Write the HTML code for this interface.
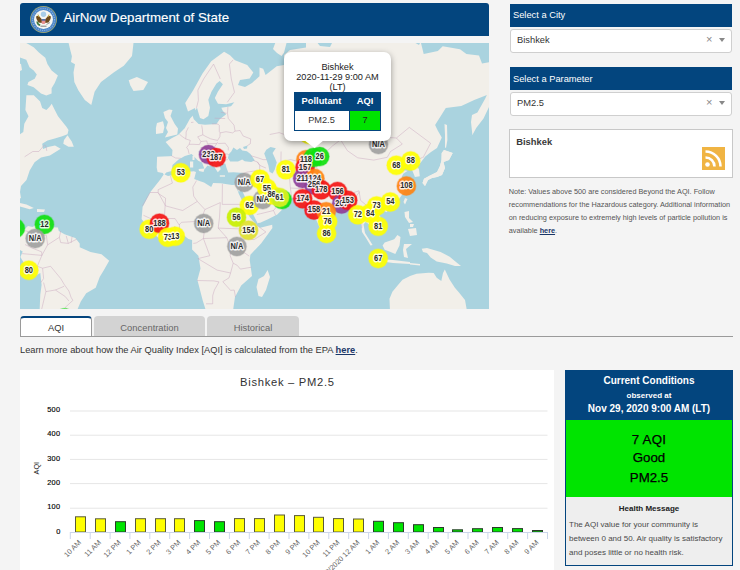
<!DOCTYPE html>
<html><head><meta charset="utf-8">
<style>
*{box-sizing:border-box;margin:0;padding:0}
html,body{width:740px;height:570px;overflow:hidden}
body{background:#f4f4f4;font-family:"Liberation Sans",sans-serif;position:relative;color:#333}
.abs{position:absolute}
.t{position:absolute;white-space:nowrap;line-height:1}
.hdr{left:20px;top:3px;width:469px;height:33px;background:#03457e;border-radius:3px 3px 0 0}
.bluebar{position:absolute;left:510px;width:222px;height:23px;background:#03457e;color:#fff;font-size:9.3px}
.sel{position:absolute;left:509.6px;width:222.9px;height:24px;background:#fff;border:1px solid #cfcfcf;border-radius:3px}
.popup{left:284px;top:52px;width:107px;height:89px;background:#fff;border-radius:7px;box-shadow:0 2px 6px rgba(0,0,0,0.38)}
.tab{position:absolute;top:316px;height:20px;border-radius:4px 4px 0 0;font-size:9.4px;text-align:center}
</style></head><body>
<div class="abs hdr"></div>
<svg class="abs" style="left:29px;top:5px" width="29" height="29" viewBox="0 0 29 29">
<circle cx="14.5" cy="14.5" r="13.4" fill="#a9ab6c"/>
<circle cx="14.5" cy="14.5" r="12.7" fill="#4a84c8"/>
<circle cx="14.5" cy="14.5" r="11" fill="none" stroke="#8fb6e0" stroke-width="1.2" stroke-dasharray="1 1.2"/>
<circle cx="14.5" cy="14.5" r="9.5" fill="#f6f6f2"/>
<circle cx="14.5" cy="9.3" r="2.7" fill="#a8cde8"/>
<path d="M7 11.5 L9.5 10.5 L13 14.5 L12.8 18 L9.5 17.5 L7.5 14 Z" fill="#6e4a1c"/>
<path d="M22 11.5 L19.5 10.5 L16 14.5 L16.2 18 L19.5 17.5 L21.5 14 Z" fill="#6e4a1c"/>
<path d="M9 9.5 L10 12" stroke="#c9b24a" stroke-width="1"/><path d="M20 9.5 L19 12" stroke="#c9b24a" stroke-width="1"/>
<rect x="12.7" y="14.2" width="3.6" height="4.8" rx="1.3" fill="#ea8f8f"/>
<rect x="12.7" y="14.2" width="3.6" height="1.4" fill="#2f5fa8"/>
<path d="M8.2 16.5 Q8.4 19.5 11.2 20.3" stroke="#3f7a3f" stroke-width="1.7" fill="none"/>
<path d="M17.5 19.5 L21 17.5" stroke="#9a9a9a" stroke-width="1"/>
<path d="M11.5 21.2 L17.5 21.2" stroke="#8a8a8a" stroke-width="1.1"/>
</svg>
<div class="t" style="left:63.5px;top:10.6px;font-size:13.3px;color:#fff;-webkit-text-stroke:0.15px #fff">AirNow Department of State</div>

<svg width="469" height="266" viewBox="20 43 469 266" style="position:absolute;left:20px;top:43px;display:block">
<rect x="0" y="0" width="740" height="570" fill="#aad3df"/>
<g fill="#f2efe9">
<path d="M18.0 43.0 L26.3 43.0 L33.7 47.2 L38.9 52.5 L45.3 57.7 L47.4 64.0 L51.6 70.4 L57.9 75.6 L54.7 83.0 L51.6 88.3 L51.6 93.5 L46.3 95.6 L41.0 93.5 L33.7 87.2 L27.4 85.1 L28.4 82.0 L34.7 78.8 L36.8 74.6 L33.7 70.4 L29.5 67.2 L26.3 59.8 L18.0 56.7Z"/>
<path d="M18.0 63.0 L21.0 64.0 L22.0 70.0 L18.0 72.0Z"/>
<path d="M26.4 95.3 L33.8 95.3 L40.1 101.6 L42.2 107.9 L46.4 110.0 L49.6 106.8 L51.7 103.7 L54.8 110.0 L58.0 116.3 L62.2 121.6 L66.4 126.8 L68.5 130.0 L67.5 134.2 L62.2 136.3 L54.8 138.4 L47.5 140.5 L42.2 143.7 L43.0 149.0 L48.0 147.0 L55.0 145.5 L60.7 148.8 L49.9 155.4 L41.0 157.4 L34.6 162.3 L29.7 170.4 L26.5 180.0 L21.0 186.0 L20.0 192.0 L21.0 198.1 L18.0 199.0 L18.0 134.2 L20.0 134.2 L23.3 132.1 L24.3 123.7 L28.5 116.3 L25.4 110.0Z"/>
<path d="M63.3 143.7 L64.0 140.0 L67.5 135.3 L71.7 141.6 L73.8 146.8 L68.5 146.8Z"/>
<path d="M18.0 202.5 L26.5 204.4 L33.8 208.1 L29.7 209.3 L18.0 206.0Z"/>
<path d="M37.0 209.0 L45.0 209.5 L44.0 212.0 L37.0 212.0Z"/>
<path d="M68.6 43.0 L133.5 43.0 L132.0 56.0 L123.8 65.7 L114.0 72.2 L101.0 82.0 L94.6 91.7 L91.3 104.9 L84.8 100.0 L78.3 90.2 L74.3 82.1 L73.5 72.4 L75.0 64.3 L71.0 61.9 L71.9 56.2 L70.2 49.7Z"/>
<path d="M128.7 80.3 L136.8 77.0 L148.0 82.0 L143.3 90.0 L133.5 91.0 L130.3 85.2Z"/>
<path d="M169.1 109.5 L172.5 110.0 L170.5 116.0 L174.7 124.0 L178.0 128.4 L177.3 134.5 L164.9 137.4 L168.0 132.0 L166.0 128.0 L168.0 122.0 L165.0 118.0 L163.4 112.0Z"/>
<path d="M157.0 123.0 L163.0 121.2 L164.4 127.0 L163.0 133.0 L156.0 134.0 L155.9 128.0Z"/>
<path d="M18.0 228.0 L23.6 230.0 L28.0 226.0 L32.5 227.0 L38.4 224.0 L40.0 227.5 L47.4 227.0 L57.9 227.5 L58.8 231.0 L64.5 234.3 L70.2 236.2 L75.3 237.9 L79.7 243.4 L79.7 247.2 L90.5 252.0 L101.5 254.2 L109.2 260.8 L103.8 270.3 L99.7 277.0 L95.7 287.8 L86.2 293.2 L80.8 301.4 L76.8 311.0 L39.6 311.0 L40.3 294.6 L41.6 285.1 L40.3 273.0 L35.0 276.0 L28.2 270.4 L20.4 257.1 L22.7 251.6 L18.0 249.0Z"/>
<path d="M188.0 111.5 L185.2 102.9 L193.2 90.3 L202.5 73.4 L211.2 61.3 L224.1 51.8 L230.0 55.3 L235.0 60.2 L247.2 65.1 L253.3 72.5 L249.7 78.6 L240.0 80.0 L238.0 85.0 L245.0 87.0 L252.0 83.0 L259.5 76.2 L259.5 67.6 L263.2 68.8 L265.6 75.0 L276.7 66.3 L284.0 65.1 L284.0 55.0 L290.0 50.0 L306.0 47.5 L306.0 41.0 L420.5 41.0 L423.7 54.0 L437.9 50.9 L442.7 46.2 L460.0 49.3 L466.4 54.0 L479.0 55.6 L482.0 63.5 L491.0 62.0 L491.0 103.0 L483.5 118.4 L476.2 128.1 L472.4 135.0 L441.8 137.4 L437.0 148.0 L431.0 152.0 L425.3 156.5 L421.1 162.0 L417.0 166.6 L419.0 169.3 L419.8 176.2 L414.9 176.9 L411.8 169.3 L410.9 165.3 L406.9 163.6 L404.6 163.4 L401.9 165.1 L398.3 167.0 L400.6 169.9 L405.5 170.5 L407.8 170.7 L403.3 173.8 L401.7 177.0 L406.1 184.9 L404.0 191.9 L398.9 199.2 L391.7 204.0 L383.3 206.0 L377.6 207.2 L375.5 210.7 L380.3 216.5 L382.2 224.3 L378.0 229.0 L373.8 230.8 L371.0 227.0 L368.0 223.5 L365.6 222.0 L363.5 224.5 L365.0 233.0 L369.0 239.2 L372.6 245.0 L370.5 245.5 L366.0 238.0 L362.0 232.0 L361.5 226.0 L360.0 220.0 L357.5 214.9 L355.2 216.5 L352.0 212.0 L351.4 208.5 L348.5 204.4 L342.8 205.0 L340.0 208.5 L333.9 213.1 L327.6 222.3 L322.5 231.8 L320.0 228.2 L315.2 217.4 L313.0 210.5 L305.7 206.4 L302.9 202.5 L302.0 198.6 L289.9 197.6 L284.5 197.0 L283.0 194.0 L281.7 195.3 L282.4 199.5 L286.1 201.2 L288.5 203.3 L277.3 214.5 L268.0 219.3 L260.2 222.7 L257.5 223.0 L256.6 225.0 L260.2 227.8 L268.2 225.7 L272.2 224.7 L272.4 228.0 L261.1 243.4 L250.4 254.8 L249.7 260.1 L252.0 276.0 L241.2 285.5 L235.0 297.0 L233.6 306.6 L233.0 311.0 L206.0 311.0 L202.6 300.0 L200.0 290.0 L197.4 280.0 L200.5 268.4 L198.4 255.8 L192.1 249.5 L192.1 240.0 L188.4 239.1 L183.4 235.1 L174.7 236.8 L167.1 237.1 L160.1 238.9 L149.8 231.0 L148.9 229.0 L141.6 219.0 L142.6 206.9 L150.4 191.9 L160.3 179.4 L163.7 174.4 L162.8 173.0 L157.6 172.0 L156.7 167.4 L157.1 156.8 L169.1 156.3 L172.0 156.0 L172.5 150.0 L165.6 142.0 L171.6 138.3 L178.3 134.7 L184.7 128.2 L190.1 118.5 L194.9 113.6 L195.1 108.1Z"/>
<path d="M276.0 41.0 L287.0 41.0 L284.0 52.8 L281.6 56.0 L277.0 53.0 L273.0 49.0Z"/>
<path d="M444.0 150.0 L452.7 153.0 L449.0 160.0 L443.5 162.0 L445.0 168.0 L442.0 175.0 L437.0 177.0 L432.0 178.0 L428.0 180.0 L425.0 186.0 L422.5 183.0 L424.0 178.8 L430.0 175.5 L437.0 172.0 L440.0 166.0 L441.5 160.0 L441.7 153.0Z"/>
<path d="M444.5 124.0 L447.0 125.0 L447.4 140.0 L446.0 148.0 L445.0 147.0 L445.0 135.0Z"/>
<path d="M386.0 259.5 L393.0 260.0 L410.0 262.0 L410.0 264.0 L393.0 263.0 L386.0 262.0Z"/>
<path d="M410.0 263.0 L420.0 264.0 L420.0 265.5 L410.0 264.5Z"/>
<path d="M382.6 245.5 L384.7 242.4 L394.2 239.2 L397.4 235.0 L400.5 237.1 L399.5 245.5 L395.3 254.0 L390.0 251.8 L384.7 249.7Z"/>
<path d="M404.0 244.0 L412.0 244.0 L406.0 249.0 L408.0 258.0 L404.0 257.0 L403.0 250.0Z"/>
<path d="M404.5 212.0 L409.0 211.0 L409.0 218.0 L413.0 222.0 L409.0 223.0 L405.0 217.0Z"/>
<path d="M408.0 229.0 L416.0 228.0 L417.0 235.0 L410.0 236.0Z"/>
<path d="M410.0 224.0 L414.0 224.0 L413.0 227.0 L410.0 227.0Z"/>
<path d="M405.0 198.0 L407.5 199.0 L405.0 204.5 L403.5 202.0Z"/>
<path d="M383.5 208.5 L388.0 208.5 L387.0 212.3 L384.0 211.0Z"/>
<path d="M421.7 248.8 L427.0 248.0 L440.6 252.0 L449.7 256.7 L456.0 262.0 L461.0 266.0 L455.0 266.0 L446.8 263.6 L436.7 261.6 L430.7 257.5 L427.0 253.0 L423.0 252.0Z"/>
<path d="M390.0 311.0 L389.5 298.8 L392.4 291.8 L398.0 285.0 L402.5 279.7 L410.0 276.0 L416.6 273.7 L428.7 272.7 L433.7 273.0 L436.7 277.7 L441.3 280.9 L443.0 273.0 L444.8 269.6 L449.7 279.8 L454.9 287.8 L459.2 292.7 L465.0 300.0 L467.0 311.0Z"/>
<path d="M267.6 270.1 L270.0 277.0 L266.0 290.0 L262.0 297.0 L258.5 296.0 L256.5 287.0 L258.5 279.0 L264.0 276.0Z"/>
<path d="M327.0 229.0 L329.0 229.0 L331.0 233.0 L329.0 236.0 L327.0 235.0Z"/>
<path d="M198.6 169.0 L204.6 168.5 L203.5 172.0 L199.0 171.0Z"/>
</g><g fill="#aad3df">
<path d="M192.1 114.3 L193.8 119.2 L198.6 124.0 L205.1 124.8 L216.5 124.0 L219.7 119.2 L226.2 114.3 L222.9 111.0 L221.3 107.8 L231.0 106.2 L234.3 102.2 L226.2 104.3 L218.0 103.8 L214.8 98.1 L218.0 91.6 L222.9 84.3 L219.7 81.1 L216.5 83.5 L211.6 91.6 L208.3 99.7 L210.0 107.8 L208.3 116.0 L203.5 119.2 L200.0 118.0 L197.0 107.8Z"/>
<path d="M164.6 174.4 L166.2 172.6 L171.6 170.9 L172.5 165.0 L178.6 159.6 L184.9 156.0 L191.6 154.0 L198.2 160.7 L202.0 162.4 L204.6 169.3 L207.5 165.5 L210.2 166.6 L207.1 162.0 L200.7 156.0 L198.4 151.6 L201.2 151.0 L206.1 156.4 L212.1 162.0 L215.0 168.0 L217.8 172.3 L220.7 169.3 L218.8 162.8 L225.4 163.7 L226.4 167.6 L228.3 172.6 L233.5 172.3 L243.9 173.0 L242.7 178.8 L240.4 184.6 L236.6 184.8 L232.0 185.0 L220.7 183.3 L213.1 183.0 L211.2 186.9 L204.0 182.4 L200.2 181.2 L194.2 179.0 L196.0 172.0 L193.9 171.3 L180.4 172.6 L173.5 175.0 L168.0 176.0Z"/>
<path d="M230.2 161.4 L227.9 158.0 L229.0 154.0 L231.3 151.5 L233.4 147.4 L237.0 150.0 L240.0 148.0 L242.3 150.5 L246.9 151.3 L250.5 154.0 L254.8 160.5 L251.2 161.9 L244.7 161.2 L242.2 159.6 L238.0 161.5 L234.0 161.6Z"/>
<path d="M243.0 147.0 L247.5 145.5 L247.0 148.5 L244.0 149.0Z"/>
<path d="M270.5 147.1 L275.8 148.2 L272.6 152.9 L274.7 157.6 L276.8 162.4 L274.7 169.7 L272.6 173.4 L269.5 171.8 L268.4 165.5 L266.3 159.2 L264.2 153.4 L266.3 149.7Z"/>
<path d="M236.5 187.5 L238.9 194.0 L242.1 200.6 L245.4 209.3 L249.7 217.0 L256.6 225.0 L257.5 223.0 L252.0 212.0 L249.2 205.5 L245.0 197.0 L241.2 188.6 L239.0 192.0Z"/>
<path d="M266.9 187.5 L265.9 189.0 L269.7 195.3 L272.5 197.2 L278.0 199.5 L279.8 197.9 L281.7 195.3 L283.0 194.0 L281.7 193.7 L276.0 192.5 L271.2 189.7Z"/>
<path d="M435.1 125.1 L445.8 108.0 L461.3 105.9 L474.2 99.9 L486.9 95.1 L485.0 99.0 L477.4 112.5 L472.0 115.0 L471.0 122.0 L472.4 134.9 L460.0 140.0 L452.7 150.0 L446.0 148.0 L441.8 137.4 L438.0 131.0Z"/>
<path d="M316.0 41.0 L333.0 41.0 L330.0 47.0 L320.0 46.0Z"/>
<path d="M412.0 41.0 L421.0 41.0 L419.0 45.0Z"/>
</g><g fill="#f2efe9">
<path d="M198.6 169.0 L204.6 168.5 L203.5 172.0 L199.0 171.0Z"/>
<path d="M190.0 161.5 L193.2 161.5 L193.2 167.5 L190.0 167.5Z"/>
<path d="M192.5 155.8 L194.5 155.8 L194.5 160.0 L192.5 160.0Z"/>
<path d="M219.8 175.3 L225.0 175.3 L225.0 176.7 L219.8 176.7Z"/>
<path d="M236.5 177.0 L241.0 176.0 L240.0 178.5 L237.0 178.5Z"/>
<path d="M444.5 124.0 L447.0 125.0 L447.4 140.0 L446.0 148.0 L445.0 147.0 L445.0 135.0Z"/>
<path d="M444.0 150.0 L452.7 153.0 L449.0 160.0 L443.5 162.0 L445.0 168.0 L442.0 175.0 L437.0 177.0 L432.0 178.0 L428.0 180.0 L425.0 186.0 L422.5 183.0 L424.0 178.8 L430.0 175.5 L437.0 172.0 L440.0 166.0 L441.5 160.0 L441.7 153.0Z"/>
</g>
<g fill="none" stroke="#c6a4bd" stroke-width="0.75" stroke-opacity="0.6" stroke-linejoin="round">
<path d="M171.3 155.7 L175.6 158.0 L180.8 158.3"/>
<path d="M179.4 134.2 L182.3 136.6 L185.7 138.9 L190.3 140.4 L189.1 144.3 L186.5 147.7 L188.0 149.1 L189.1 153.9"/>
<path d="M191.0 122.5 L193.5 122.2"/>
<path d="M188.4 127.4 L186.1 132.0 L186.1 135.1 L185.7 138.9"/>
<path d="M201.7 125.4 L202.4 129.6 L202.8 134.8 L197.7 136.8 L200.9 141.5 L199.4 144.6 L192.9 144.3 L189.1 144.3"/>
<path d="M211.9 123.8 L218.0 124.1 L219.3 125.4 L219.3 131.4 L220.1 132.9 L219.9 136.6 L217.6 140.4"/>
<path d="M202.8 134.8 L206.0 136.6 L210.8 138.9 L217.6 140.4"/>
<path d="M200.9 141.5 L206.8 140.9 L207.4 143.8 L216.9 143.5 L217.6 142.1"/>
<path d="M205.7 147.4 L210.6 149.1 L213.3 148.5 L216.9 143.5"/>
<path d="M200.7 147.7 L205.7 147.4"/>
<path d="M218.2 143.5 L225.2 143.2 L228.3 147.4 L228.3 150.4"/>
<path d="M218.2 154.9 L222.2 154.7 L227.1 153.9 L229.0 154.9"/>
<path d="M218.2 161.1 L224.7 160.1 L227.9 159.6"/>
<path d="M210.6 149.1 L211.4 153.3 L211.2 157.8 L211.9 160.1"/>
<path d="M213.8 158.6 L218.2 161.1 L217.3 158.6 L218.2 154.9 L217.4 152.6 L213.3 148.5"/>
<path d="M229.4 64.1 L231.3 79.0 L234.5 92.3 L227.3 102.3"/>
<path d="M213.6 64.1 L203.6 79.0 L197.9 90.1 L198.4 100.3 L196.5 107.9"/>
<path d="M213.6 64.1 L220.3 79.0"/>
<path d="M229.4 64.1 L233.2 59.8"/>
<path d="M227.9 106.8 L227.5 113.3 L228.3 118.5 L234.0 125.1 L235.1 131.1 L240.1 130.5 L243.1 136.0 L250.7 138.9 L250.3 143.8 L247.3 145.7"/>
<path d="M220.9 112.3 L226.6 113.3"/>
<path d="M214.6 118.2 L225.2 118.5"/>
<path d="M220.1 132.9 L226.0 131.7 L232.6 132.9 L235.1 131.1"/>
<path d="M250.7 155.7 L257.9 157.8 L263.0 159.6 L266.8 159.6"/>
<path d="M253.5 160.6 L257.3 161.9 L259.6 165.3 L259.8 171.4 L255.3 170.9 L246.9 172.1 L243.1 174.0"/>
<path d="M265.9 168.0 L260.2 165.6 L257.3 161.9"/>
<path d="M259.8 171.4 L261.7 176.3 L264.8 182.2 L266.8 187.5"/>
<path d="M255.3 170.9 L252.6 177.5 L248.4 180.0 L249.4 182.5 L259.6 189.3 L263.0 189.5"/>
<path d="M248.4 180.0 L242.3 181.6 L241.0 188.6"/>
<path d="M256.8 214.5 L260.6 213.7 L273.5 210.5 L275.6 215.3"/>
<path d="M272.7 199.9 L279.6 203.2 L273.5 210.5"/>
<path d="M222.4 184.0 L222.2 204.4 L244.8 204.4"/>
<path d="M196.5 180.6 L192.8 187.1 L193.7 196.1 L197.3 201.4 L204.9 209.5 L220.3 202.6"/>
<path d="M170.5 176.1 L172.4 183.1 L158.2 189.7 L158.2 192.5"/>
<path d="M158.2 192.5 L165.6 205.9 L182.7 210.5 L197.3 201.4"/>
<path d="M158.2 193.4 L165.6 198.2 L164.4 217.5 L151.5 219.0 L143.5 215.3"/>
<path d="M158.2 192.5 L150.0 192.5 L142.4 205.9"/>
<path d="M204.9 209.5 L200.5 221.2 L181.5 222.3 L179.1 224.9 L175.1 218.6 L167.1 218.4"/>
<path d="M220.3 202.6 L219.5 217.3 L218.2 228.1 L226.8 237.7 L203.4 238.5 L204.1 232.9 L201.3 227.0 L202.2 222.3"/>
<path d="M218.2 228.1 L239.7 228.9 L244.8 204.4"/>
<path d="M239.7 228.9 L241.2 238.7 L254.1 239.6 L265.9 232.0 L256.8 225.3"/>
<path d="M226.8 237.7 L230.9 249.1 L230.2 255.7 L233.2 263.2 L230.6 273.0 L217.1 270.1 L197.9 258.6"/>
<path d="M203.4 238.5 L196.2 243.0 L193.3 243.4"/>
<path d="M203.4 238.5 L209.8 255.7 L197.9 258.6"/>
<path d="M239.3 249.1 L249.2 256.1"/>
<path d="M251.5 267.2 L240.4 269.1 L237.2 265.3 L233.2 263.2"/>
<path d="M197.1 280.5 L213.8 280.9 L219.0 281.9"/>
<path d="M230.6 273.0 L229.0 277.9 L222.8 281.7 L230.6 290.4 L234.2 290.0 L235.5 297.0"/>
<path d="M206.0 303.8 L212.7 303.8 L212.7 295.7 L214.4 290.0 L219.0 281.9"/>
<path d="M151.9 223.3 L146.2 228.1"/>
<path d="M155.7 226.2 L149.4 229.1 L154.2 232.0 L158.9 232.9 L160.4 237.7"/>
<path d="M164.2 228.1 L169.2 237.5"/>
<path d="M174.5 226.2 L177.0 235.6"/>
<path d="M179.4 224.3 L179.8 235.0"/>
<path d="M269.7 134.5 L279.2 132.6 L286.0 135.1 L290.6 123.5 L306.2 121.2 L320.0 125.1 L333.3 136.6 L340.6 139.8"/>
<path d="M340.6 139.8 L361.8 131.4 L375.9 136.6 L396.4 138.0 L409.3 127.4 L430.6 143.2 L423.0 157.8"/>
<path d="M340.6 139.8 L347.4 150.7 L357.7 157.8 L373.8 160.1 L387.3 157.3 L390.5 151.5 L402.3 144.1 L396.4 138.0"/>
<path d="M340.6 139.8 L332.4 146.0 L326.7 151.5 L327.1 157.0 L314.9 163.9 L317.0 168.0 L317.2 171.6"/>
<path d="M281.1 151.5 L280.9 161.9 L290.6 159.6 L303.9 162.9 L309.6 158.3 L319.1 156.8"/>
<path d="M286.8 170.9 L301.0 170.9 L304.3 168.0 L303.3 165.6"/>
<path d="M310.5 171.6 L308.6 178.6 L306.4 184.2 L301.0 188.6 L290.4 188.0"/>
<path d="M291.0 170.9 L289.6 178.6 L290.4 188.0 L291.7 197.6"/>
<path d="M317.2 171.6 L323.8 177.5 L325.7 182.0 L328.6 187.5 L341.9 191.9 L349.5 194.0 L359.0 190.8"/>
<path d="M317.2 182.0 L315.3 187.5 L308.6 192.3 L305.4 199.9"/>
<path d="M342.5 195.1 L343.8 198.2 L343.8 204.4"/>
<path d="M350.4 198.2 L350.1 206.5 L354.2 199.3 L359.4 191.9"/>
<path d="M359.0 190.8 L360.5 200.3 L366.6 205.5 L365.1 207.7 L360.5 212.5 L361.8 218.4 L361.8 228.1"/>
<path d="M368.1 202.8 L377.1 202.8 L379.9 205.5"/>
<path d="M365.1 207.7 L369.4 212.5 L375.1 218.4 L370.4 219.8 L369.4 224.3"/>
<path d="M368.5 205.5 L375.1 213.5 L378.9 219.4 L373.2 227.2"/>
<path d="M422.6 157.3 L414.1 161.9 L410.9 164.6"/>
<path d="M37.5 224.7 L37.9 233.9 L46.4 235.4 L47.6 244.9"/>
<path d="M25.0 244.5 L31.6 247.8 L41.7 251.9 L41.9 255.4"/>
<path d="M76.7 239.2 L68.3 243.4 L60.7 242.6 L59.4 237.3 L47.6 244.9 L41.9 255.4 L37.3 266.3 L42.6 268.2 L50.6 266.3 L60.7 278.5 L64.5 284.9 L68.9 291.0 L71.0 297.2 L72.9 300.4 L65.3 307.3 L73.2 315.1"/>
<path d="M22.1 253.6 L41.9 255.4"/>
<path d="M42.6 268.2 L43.6 278.5 L40.9 282.5"/>
<path d="M43.6 282.5 L45.9 291.6 L55.4 290.0 L64.1 286.3"/>
<path d="M55.4 290.0 L65.3 296.6 L68.9 301.0"/>
<path d="M45.9 291.6 L41.7 309.1"/>
<path d="M60.7 231.0 L59.4 237.3"/>
<path d="M66.2 235.8 L68.3 243.4"/>
<path d="M72.1 236.4 L71.1 243.0"/>
<path d="M24.6 156.8 L32.8 151.5 L38.8 151.5 L44.5 144.9 L45.9 146.0 L46.8 150.9"/>
<path d="M17.2 229.1 L28.0 231.4"/>
</g>
<circle cx="15.3" cy="228.4" r="10.2" fill="#10e010" fill-opacity="0.35"/><circle cx="15.3" cy="228.4" r="9.5" fill="#10e010" fill-opacity="0.88"/>
<circle cx="44.4" cy="224.4" r="10.2" fill="#10e010" fill-opacity="0.35"/><circle cx="44.4" cy="224.4" r="9.5" fill="#10e010" fill-opacity="0.88"/>
<circle cx="35.2" cy="238.5" r="10.2" fill="#a0a0a0" fill-opacity="0.35"/><circle cx="35.2" cy="238.5" r="9.5" fill="#a0a0a0" fill-opacity="0.88"/>
<circle cx="28.8" cy="270.3" r="10.2" fill="#ffff00" fill-opacity="0.35"/><circle cx="28.8" cy="270.3" r="9.5" fill="#ffff00" fill-opacity="0.88"/>
<circle cx="64.6" cy="318" r="10.2" fill="#10e010" fill-opacity="0.35"/><circle cx="64.6" cy="318" r="9.5" fill="#10e010" fill-opacity="0.88"/>
<circle cx="180.8" cy="172.7" r="10.2" fill="#ffff00" fill-opacity="0.35"/><circle cx="180.8" cy="172.7" r="9.5" fill="#ffff00" fill-opacity="0.88"/>
<circle cx="208.5" cy="154.6" r="10.2" fill="#8f3f97" fill-opacity="0.35"/><circle cx="208.5" cy="154.6" r="9.5" fill="#8f3f97" fill-opacity="0.88"/>
<circle cx="216.2" cy="157.6" r="10.2" fill="#f41414" fill-opacity="0.35"/><circle cx="216.2" cy="157.6" r="9.5" fill="#f41414" fill-opacity="0.88"/>
<circle cx="244.2" cy="182.4" r="10.2" fill="#a0a0a0" fill-opacity="0.35"/><circle cx="244.2" cy="182.4" r="9.5" fill="#a0a0a0" fill-opacity="0.88"/>
<circle cx="249.4" cy="205.4" r="10.2" fill="#ffff00" fill-opacity="0.35"/><circle cx="249.4" cy="205.4" r="9.5" fill="#ffff00" fill-opacity="0.88"/>
<circle cx="236.5" cy="217.3" r="10.2" fill="#c8f000" fill-opacity="0.35"/><circle cx="236.5" cy="217.3" r="9.5" fill="#c8f000" fill-opacity="0.88"/>
<circle cx="149.2" cy="229.2" r="10.2" fill="#ffff00" fill-opacity="0.35"/><circle cx="149.2" cy="229.2" r="9.5" fill="#ffff00" fill-opacity="0.88"/>
<circle cx="159.5" cy="223.2" r="10.2" fill="#f41414" fill-opacity="0.35"/><circle cx="159.5" cy="223.2" r="9.5" fill="#f41414" fill-opacity="0.88"/>
<circle cx="167.8" cy="237.3" r="10.2" fill="#ffff00" fill-opacity="0.35"/><circle cx="167.8" cy="237.3" r="9.5" fill="#ffff00" fill-opacity="0.88"/>
<circle cx="175.2" cy="236.3" r="10.2" fill="#ffff00" fill-opacity="0.35"/><circle cx="175.2" cy="236.3" r="9.5" fill="#ffff00" fill-opacity="0.88"/>
<circle cx="203.7" cy="223.4" r="10.2" fill="#a0a0a0" fill-opacity="0.35"/><circle cx="203.7" cy="223.4" r="9.5" fill="#a0a0a0" fill-opacity="0.88"/>
<circle cx="248.5" cy="230.3" r="10.2" fill="#e0e030" fill-opacity="0.35"/><circle cx="248.5" cy="230.3" r="9.5" fill="#e0e030" fill-opacity="0.88"/>
<circle cx="236.9" cy="246.5" r="10.2" fill="#a0a0a0" fill-opacity="0.35"/><circle cx="236.9" cy="246.5" r="9.5" fill="#a0a0a0" fill-opacity="0.88"/>
<circle cx="285.8" cy="169.7" r="10.2" fill="#ffff00" fill-opacity="0.35"/><circle cx="285.8" cy="169.7" r="9.5" fill="#ffff00" fill-opacity="0.88"/>
<circle cx="260" cy="179.2" r="10.2" fill="#ffff00" fill-opacity="0.35"/><circle cx="260" cy="179.2" r="9.5" fill="#ffff00" fill-opacity="0.88"/>
<circle cx="262.8" cy="199.5" r="10.2" fill="#a0a0a0" fill-opacity="0.35"/><circle cx="262.8" cy="199.5" r="9.5" fill="#a0a0a0" fill-opacity="0.88"/>
<circle cx="266.8" cy="188.2" r="10.2" fill="#ffff00" fill-opacity="0.35"/><circle cx="266.8" cy="188.2" r="9.5" fill="#ffff00" fill-opacity="0.88"/>
<circle cx="271.6" cy="194.8" r="10.2" fill="#ffff00" fill-opacity="0.35"/><circle cx="271.6" cy="194.8" r="9.5" fill="#ffff00" fill-opacity="0.88"/>
<circle cx="282" cy="199.5" r="10.2" fill="#10e010" fill-opacity="0.35"/><circle cx="282" cy="199.5" r="9.5" fill="#10e010" fill-opacity="0.88"/>
<circle cx="279.5" cy="197.5" r="10.2" fill="#dcf020" fill-opacity="0.35"/><circle cx="279.5" cy="197.5" r="9.5" fill="#dcf020" fill-opacity="0.88"/>
<circle cx="309" cy="134.5" r="10.2" fill="#ffff00" fill-opacity="0.35"/><circle cx="309" cy="134.5" r="9.5" fill="#ffff00" fill-opacity="0.88"/>
<circle cx="305.9" cy="159.8" r="10.2" fill="#ff8412" fill-opacity="0.35"/><circle cx="305.9" cy="159.8" r="9.5" fill="#ff8412" fill-opacity="0.88"/>
<circle cx="305.1" cy="167.5" r="10.2" fill="#f41414" fill-opacity="0.35"/><circle cx="305.1" cy="167.5" r="9.5" fill="#f41414" fill-opacity="0.88"/>
<circle cx="313.5" cy="157.5" r="10.2" fill="#10e010" fill-opacity="0.35"/><circle cx="313.5" cy="157.5" r="9.5" fill="#10e010" fill-opacity="0.88"/>
<circle cx="319.7" cy="156.6" r="10.2" fill="#10e010" fill-opacity="0.35"/><circle cx="319.7" cy="156.6" r="9.5" fill="#10e010" fill-opacity="0.88"/>
<circle cx="302.7" cy="178.5" r="10.2" fill="#8f3f97" fill-opacity="0.35"/><circle cx="302.7" cy="178.5" r="9.5" fill="#8f3f97" fill-opacity="0.88"/>
<circle cx="314.8" cy="178.5" r="10.2" fill="#ff8412" fill-opacity="0.35"/><circle cx="314.8" cy="178.5" r="9.5" fill="#ff8412" fill-opacity="0.88"/>
<circle cx="314" cy="185" r="10.2" fill="#8f3f97" fill-opacity="0.35"/><circle cx="314" cy="185" r="9.5" fill="#8f3f97" fill-opacity="0.88"/>
<circle cx="321.3" cy="189.8" r="10.2" fill="#f41414" fill-opacity="0.35"/><circle cx="321.3" cy="189.8" r="9.5" fill="#f41414" fill-opacity="0.88"/>
<circle cx="337.5" cy="191.5" r="10.2" fill="#f41414" fill-opacity="0.35"/><circle cx="337.5" cy="191.5" r="9.5" fill="#f41414" fill-opacity="0.88"/>
<circle cx="341.6" cy="204" r="10.2" fill="#8f3f97" fill-opacity="0.35"/><circle cx="341.6" cy="204" r="9.5" fill="#8f3f97" fill-opacity="0.88"/>
<circle cx="347.7" cy="200.3" r="10.2" fill="#f41414" fill-opacity="0.35"/><circle cx="347.7" cy="200.3" r="9.5" fill="#f41414" fill-opacity="0.88"/>
<circle cx="302.7" cy="198.7" r="10.2" fill="#f41414" fill-opacity="0.35"/><circle cx="302.7" cy="198.7" r="9.5" fill="#f41414" fill-opacity="0.88"/>
<circle cx="314" cy="210" r="10.2" fill="#f41414" fill-opacity="0.35"/><circle cx="314" cy="210" r="9.5" fill="#f41414" fill-opacity="0.88"/>
<circle cx="326.2" cy="211.7" r="10.2" fill="#ff8412" fill-opacity="0.35"/><circle cx="326.2" cy="211.7" r="9.5" fill="#ff8412" fill-opacity="0.88"/>
<circle cx="327.6" cy="221.6" r="10.2" fill="#ffff00" fill-opacity="0.35"/><circle cx="327.6" cy="221.6" r="9.5" fill="#ffff00" fill-opacity="0.88"/>
<circle cx="326.6" cy="233.6" r="10.2" fill="#ffff00" fill-opacity="0.35"/><circle cx="326.6" cy="233.6" r="9.5" fill="#ffff00" fill-opacity="0.88"/>
<circle cx="357.8" cy="214.8" r="10.2" fill="#ffff00" fill-opacity="0.35"/><circle cx="357.8" cy="214.8" r="9.5" fill="#ffff00" fill-opacity="0.88"/>
<circle cx="370.2" cy="213.2" r="10.2" fill="#ffff00" fill-opacity="0.35"/><circle cx="370.2" cy="213.2" r="9.5" fill="#ffff00" fill-opacity="0.88"/>
<circle cx="376.6" cy="206" r="10.2" fill="#ffff00" fill-opacity="0.35"/><circle cx="376.6" cy="206" r="9.5" fill="#ffff00" fill-opacity="0.88"/>
<circle cx="390.3" cy="202" r="10.2" fill="#ffff00" fill-opacity="0.35"/><circle cx="390.3" cy="202" r="9.5" fill="#ffff00" fill-opacity="0.88"/>
<circle cx="378.2" cy="226.3" r="10.2" fill="#ffff00" fill-opacity="0.35"/><circle cx="378.2" cy="226.3" r="9.5" fill="#ffff00" fill-opacity="0.88"/>
<circle cx="378.2" cy="258.5" r="10.2" fill="#ffff00" fill-opacity="0.35"/><circle cx="378.2" cy="258.5" r="9.5" fill="#ffff00" fill-opacity="0.88"/>
<circle cx="378.5" cy="144.6" r="10.2" fill="#a0a0a0" fill-opacity="0.35"/><circle cx="378.5" cy="144.6" r="9.5" fill="#a0a0a0" fill-opacity="0.88"/>
<circle cx="396.3" cy="165.2" r="10.2" fill="#ffff00" fill-opacity="0.35"/><circle cx="396.3" cy="165.2" r="9.5" fill="#ffff00" fill-opacity="0.88"/>
<circle cx="410.7" cy="161" r="10.2" fill="#ffff00" fill-opacity="0.35"/><circle cx="410.7" cy="161" r="9.5" fill="#ffff00" fill-opacity="0.88"/>
<circle cx="406.4" cy="185.9" r="10.2" fill="#ff8412" fill-opacity="0.35"/><circle cx="406.4" cy="185.9" r="9.5" fill="#ff8412" fill-opacity="0.88"/>
<text transform="translate(44.4,226.7) scale(0.84,1)" font-family="Liberation Sans" font-weight="bold" font-size="8.9" text-anchor="middle" fill="#2a2a2a" stroke="#fff" stroke-width="2.8" stroke-opacity="0.85" stroke-linejoin="round" paint-order="stroke">12</text>
<text transform="translate(35.2,240.8) scale(0.84,1)" font-family="Liberation Sans" font-weight="bold" font-size="8.9" text-anchor="middle" fill="#2a2a2a" stroke="#fff" stroke-width="2.8" stroke-opacity="0.85" stroke-linejoin="round" paint-order="stroke">N/A</text>
<text transform="translate(28.8,272.6) scale(0.84,1)" font-family="Liberation Sans" font-weight="bold" font-size="8.9" text-anchor="middle" fill="#2a2a2a" stroke="#fff" stroke-width="2.8" stroke-opacity="0.85" stroke-linejoin="round" paint-order="stroke">80</text>
<text transform="translate(180.8,175.0) scale(0.84,1)" font-family="Liberation Sans" font-weight="bold" font-size="8.9" text-anchor="middle" fill="#2a2a2a" stroke="#fff" stroke-width="2.8" stroke-opacity="0.85" stroke-linejoin="round" paint-order="stroke">53</text>
<text transform="translate(208.5,156.9) scale(0.84,1)" font-family="Liberation Sans" font-weight="bold" font-size="8.9" text-anchor="middle" fill="#2a2a2a" stroke="#fff" stroke-width="2.8" stroke-opacity="0.85" stroke-linejoin="round" paint-order="stroke">233</text>
<text transform="translate(216.2,159.9) scale(0.84,1)" font-family="Liberation Sans" font-weight="bold" font-size="8.9" text-anchor="middle" fill="#2a2a2a" stroke="#fff" stroke-width="2.8" stroke-opacity="0.85" stroke-linejoin="round" paint-order="stroke">187</text>
<text transform="translate(244.2,184.7) scale(0.84,1)" font-family="Liberation Sans" font-weight="bold" font-size="8.9" text-anchor="middle" fill="#2a2a2a" stroke="#fff" stroke-width="2.8" stroke-opacity="0.85" stroke-linejoin="round" paint-order="stroke">N/A</text>
<text transform="translate(249.4,207.7) scale(0.84,1)" font-family="Liberation Sans" font-weight="bold" font-size="8.9" text-anchor="middle" fill="#2a2a2a" stroke="#fff" stroke-width="2.8" stroke-opacity="0.85" stroke-linejoin="round" paint-order="stroke">62</text>
<text transform="translate(236.5,219.6) scale(0.84,1)" font-family="Liberation Sans" font-weight="bold" font-size="8.9" text-anchor="middle" fill="#2a2a2a" stroke="#fff" stroke-width="2.8" stroke-opacity="0.85" stroke-linejoin="round" paint-order="stroke">56</text>
<text transform="translate(149.2,231.5) scale(0.84,1)" font-family="Liberation Sans" font-weight="bold" font-size="8.9" text-anchor="middle" fill="#2a2a2a" stroke="#fff" stroke-width="2.8" stroke-opacity="0.85" stroke-linejoin="round" paint-order="stroke">80</text>
<text transform="translate(159.5,225.5) scale(0.84,1)" font-family="Liberation Sans" font-weight="bold" font-size="8.9" text-anchor="middle" fill="#2a2a2a" stroke="#fff" stroke-width="2.8" stroke-opacity="0.85" stroke-linejoin="round" paint-order="stroke">188</text>
<text transform="translate(167.8,239.6) scale(0.84,1)" font-family="Liberation Sans" font-weight="bold" font-size="8.9" text-anchor="middle" fill="#2a2a2a" stroke="#fff" stroke-width="2.8" stroke-opacity="0.85" stroke-linejoin="round" paint-order="stroke">73</text>
<text transform="translate(175.2,238.6) scale(0.84,1)" font-family="Liberation Sans" font-weight="bold" font-size="8.9" text-anchor="middle" fill="#2a2a2a" stroke="#fff" stroke-width="2.8" stroke-opacity="0.85" stroke-linejoin="round" paint-order="stroke">13</text>
<text transform="translate(203.7,225.7) scale(0.84,1)" font-family="Liberation Sans" font-weight="bold" font-size="8.9" text-anchor="middle" fill="#2a2a2a" stroke="#fff" stroke-width="2.8" stroke-opacity="0.85" stroke-linejoin="round" paint-order="stroke">N/A</text>
<text transform="translate(248.5,232.6) scale(0.84,1)" font-family="Liberation Sans" font-weight="bold" font-size="8.9" text-anchor="middle" fill="#2a2a2a" stroke="#fff" stroke-width="2.8" stroke-opacity="0.85" stroke-linejoin="round" paint-order="stroke">154</text>
<text transform="translate(236.9,248.8) scale(0.84,1)" font-family="Liberation Sans" font-weight="bold" font-size="8.9" text-anchor="middle" fill="#2a2a2a" stroke="#fff" stroke-width="2.8" stroke-opacity="0.85" stroke-linejoin="round" paint-order="stroke">N/A</text>
<text transform="translate(285.8,172.0) scale(0.84,1)" font-family="Liberation Sans" font-weight="bold" font-size="8.9" text-anchor="middle" fill="#2a2a2a" stroke="#fff" stroke-width="2.8" stroke-opacity="0.85" stroke-linejoin="round" paint-order="stroke">81</text>
<text transform="translate(260,181.5) scale(0.84,1)" font-family="Liberation Sans" font-weight="bold" font-size="8.9" text-anchor="middle" fill="#2a2a2a" stroke="#fff" stroke-width="2.8" stroke-opacity="0.85" stroke-linejoin="round" paint-order="stroke">67</text>
<text transform="translate(262.8,201.8) scale(0.84,1)" font-family="Liberation Sans" font-weight="bold" font-size="8.9" text-anchor="middle" fill="#2a2a2a" stroke="#fff" stroke-width="2.8" stroke-opacity="0.85" stroke-linejoin="round" paint-order="stroke">N/A</text>
<text transform="translate(266.8,190.5) scale(0.84,1)" font-family="Liberation Sans" font-weight="bold" font-size="8.9" text-anchor="middle" fill="#2a2a2a" stroke="#fff" stroke-width="2.8" stroke-opacity="0.85" stroke-linejoin="round" paint-order="stroke">55</text>
<text transform="translate(271.6,197.1) scale(0.84,1)" font-family="Liberation Sans" font-weight="bold" font-size="8.9" text-anchor="middle" fill="#2a2a2a" stroke="#fff" stroke-width="2.8" stroke-opacity="0.85" stroke-linejoin="round" paint-order="stroke">86</text>
<text transform="translate(279.5,199.8) scale(0.84,1)" font-family="Liberation Sans" font-weight="bold" font-size="8.9" text-anchor="middle" fill="#2a2a2a" stroke="#fff" stroke-width="2.8" stroke-opacity="0.85" stroke-linejoin="round" paint-order="stroke">61</text>
<text transform="translate(305.9,162.1) scale(0.84,1)" font-family="Liberation Sans" font-weight="bold" font-size="8.9" text-anchor="middle" fill="#2a2a2a" stroke="#fff" stroke-width="2.8" stroke-opacity="0.85" stroke-linejoin="round" paint-order="stroke">118</text>
<text transform="translate(305.1,169.8) scale(0.84,1)" font-family="Liberation Sans" font-weight="bold" font-size="8.9" text-anchor="middle" fill="#2a2a2a" stroke="#fff" stroke-width="2.8" stroke-opacity="0.85" stroke-linejoin="round" paint-order="stroke">157</text>
<text transform="translate(319.7,158.9) scale(0.84,1)" font-family="Liberation Sans" font-weight="bold" font-size="8.9" text-anchor="middle" fill="#2a2a2a" stroke="#fff" stroke-width="2.8" stroke-opacity="0.85" stroke-linejoin="round" paint-order="stroke">26</text>
<text transform="translate(302.7,180.8) scale(0.84,1)" font-family="Liberation Sans" font-weight="bold" font-size="8.9" text-anchor="middle" fill="#2a2a2a" stroke="#fff" stroke-width="2.8" stroke-opacity="0.85" stroke-linejoin="round" paint-order="stroke">211</text>
<text transform="translate(314.8,180.8) scale(0.84,1)" font-family="Liberation Sans" font-weight="bold" font-size="8.9" text-anchor="middle" fill="#2a2a2a" stroke="#fff" stroke-width="2.8" stroke-opacity="0.85" stroke-linejoin="round" paint-order="stroke">124</text>
<text transform="translate(314,187.3) scale(0.84,1)" font-family="Liberation Sans" font-weight="bold" font-size="8.9" text-anchor="middle" fill="#2a2a2a" stroke="#fff" stroke-width="2.8" stroke-opacity="0.85" stroke-linejoin="round" paint-order="stroke">256</text>
<text transform="translate(321.3,192.1) scale(0.84,1)" font-family="Liberation Sans" font-weight="bold" font-size="8.9" text-anchor="middle" fill="#2a2a2a" stroke="#fff" stroke-width="2.8" stroke-opacity="0.85" stroke-linejoin="round" paint-order="stroke">178</text>
<text transform="translate(337.5,193.8) scale(0.84,1)" font-family="Liberation Sans" font-weight="bold" font-size="8.9" text-anchor="middle" fill="#2a2a2a" stroke="#fff" stroke-width="2.8" stroke-opacity="0.85" stroke-linejoin="round" paint-order="stroke">156</text>
<text transform="translate(341.6,206.3) scale(0.84,1)" font-family="Liberation Sans" font-weight="bold" font-size="8.9" text-anchor="middle" fill="#2a2a2a" stroke="#fff" stroke-width="2.8" stroke-opacity="0.85" stroke-linejoin="round" paint-order="stroke">207</text>
<text transform="translate(347.7,202.6) scale(0.84,1)" font-family="Liberation Sans" font-weight="bold" font-size="8.9" text-anchor="middle" fill="#2a2a2a" stroke="#fff" stroke-width="2.8" stroke-opacity="0.85" stroke-linejoin="round" paint-order="stroke">153</text>
<text transform="translate(302.7,201.0) scale(0.84,1)" font-family="Liberation Sans" font-weight="bold" font-size="8.9" text-anchor="middle" fill="#2a2a2a" stroke="#fff" stroke-width="2.8" stroke-opacity="0.85" stroke-linejoin="round" paint-order="stroke">174</text>
<text transform="translate(314,212.3) scale(0.84,1)" font-family="Liberation Sans" font-weight="bold" font-size="8.9" text-anchor="middle" fill="#2a2a2a" stroke="#fff" stroke-width="2.8" stroke-opacity="0.85" stroke-linejoin="round" paint-order="stroke">158</text>
<text transform="translate(326.2,214.0) scale(0.84,1)" font-family="Liberation Sans" font-weight="bold" font-size="8.9" text-anchor="middle" fill="#2a2a2a" stroke="#fff" stroke-width="2.8" stroke-opacity="0.85" stroke-linejoin="round" paint-order="stroke">21</text>
<text transform="translate(327.6,223.9) scale(0.84,1)" font-family="Liberation Sans" font-weight="bold" font-size="8.9" text-anchor="middle" fill="#2a2a2a" stroke="#fff" stroke-width="2.8" stroke-opacity="0.85" stroke-linejoin="round" paint-order="stroke">76</text>
<text transform="translate(326.6,235.9) scale(0.84,1)" font-family="Liberation Sans" font-weight="bold" font-size="8.9" text-anchor="middle" fill="#2a2a2a" stroke="#fff" stroke-width="2.8" stroke-opacity="0.85" stroke-linejoin="round" paint-order="stroke">86</text>
<text transform="translate(357.8,217.1) scale(0.84,1)" font-family="Liberation Sans" font-weight="bold" font-size="8.9" text-anchor="middle" fill="#2a2a2a" stroke="#fff" stroke-width="2.8" stroke-opacity="0.85" stroke-linejoin="round" paint-order="stroke">72</text>
<text transform="translate(370.2,215.5) scale(0.84,1)" font-family="Liberation Sans" font-weight="bold" font-size="8.9" text-anchor="middle" fill="#2a2a2a" stroke="#fff" stroke-width="2.8" stroke-opacity="0.85" stroke-linejoin="round" paint-order="stroke">84</text>
<text transform="translate(376.6,208.3) scale(0.84,1)" font-family="Liberation Sans" font-weight="bold" font-size="8.9" text-anchor="middle" fill="#2a2a2a" stroke="#fff" stroke-width="2.8" stroke-opacity="0.85" stroke-linejoin="round" paint-order="stroke">73</text>
<text transform="translate(390.3,204.3) scale(0.84,1)" font-family="Liberation Sans" font-weight="bold" font-size="8.9" text-anchor="middle" fill="#2a2a2a" stroke="#fff" stroke-width="2.8" stroke-opacity="0.85" stroke-linejoin="round" paint-order="stroke">54</text>
<text transform="translate(378.2,228.6) scale(0.84,1)" font-family="Liberation Sans" font-weight="bold" font-size="8.9" text-anchor="middle" fill="#2a2a2a" stroke="#fff" stroke-width="2.8" stroke-opacity="0.85" stroke-linejoin="round" paint-order="stroke">81</text>
<text transform="translate(378.2,260.8) scale(0.84,1)" font-family="Liberation Sans" font-weight="bold" font-size="8.9" text-anchor="middle" fill="#2a2a2a" stroke="#fff" stroke-width="2.8" stroke-opacity="0.85" stroke-linejoin="round" paint-order="stroke">67</text>
<text transform="translate(378.5,146.9) scale(0.84,1)" font-family="Liberation Sans" font-weight="bold" font-size="8.9" text-anchor="middle" fill="#2a2a2a" stroke="#fff" stroke-width="2.8" stroke-opacity="0.85" stroke-linejoin="round" paint-order="stroke">N/A</text>
<text transform="translate(396.3,167.5) scale(0.84,1)" font-family="Liberation Sans" font-weight="bold" font-size="8.9" text-anchor="middle" fill="#2a2a2a" stroke="#fff" stroke-width="2.8" stroke-opacity="0.85" stroke-linejoin="round" paint-order="stroke">68</text>
<text transform="translate(410.7,163.3) scale(0.84,1)" font-family="Liberation Sans" font-weight="bold" font-size="8.9" text-anchor="middle" fill="#2a2a2a" stroke="#fff" stroke-width="2.8" stroke-opacity="0.85" stroke-linejoin="round" paint-order="stroke">88</text>
<text transform="translate(406.4,188.2) scale(0.84,1)" font-family="Liberation Sans" font-weight="bold" font-size="8.9" text-anchor="middle" fill="#2a2a2a" stroke="#fff" stroke-width="2.8" stroke-opacity="0.85" stroke-linejoin="round" paint-order="stroke">108</text>
</svg>

<div class="abs popup"></div>
<svg class="abs" style="left:300px;top:139px" width="30" height="12"><path d="M4 1 L14.5 9 L24 1 Z" fill="#fff"/></svg>
<div class="t" style="left:284px;width:107px;text-align:center;top:63px;font-size:9.2px;color:#222">Bishkek</div>
<div class="t" style="left:284px;width:107px;text-align:center;top:72.7px;font-size:9.2px;color:#222">2020-11-29 9:00 AM</div>
<div class="t" style="left:284px;width:107px;text-align:center;top:82.7px;font-size:9.2px;color:#222">(LT)</div>
<div class="abs" style="left:294px;top:92px;width:87px;height:39px;border:1px solid #03457e;background:#fff"></div>
<div class="abs" style="left:294px;top:92px;width:87px;height:19px;background:#03457e"></div>
<div class="abs" style="left:349px;top:111px;width:31px;height:19px;background:#00e400"></div>
<div class="abs" style="left:348.5px;top:111px;width:1px;height:19px;background:#03457e"></div>
<div class="t" style="left:294px;width:55px;text-align:center;top:96.6px;font-size:9.3px;font-weight:bold;color:#fff">Pollutant</div>
<div class="t" style="left:349px;width:32px;text-align:center;top:96.6px;font-size:9.3px;font-weight:bold;color:#fff">AQI</div>
<div class="t" style="left:294px;width:55px;text-align:center;top:115.6px;font-size:9.2px;color:#333">PM2.5</div>
<div class="t" style="left:349px;width:32px;text-align:center;top:115.6px;font-size:9.2px;color:#222">7</div>

<!-- right panels -->
<div class="bluebar" style="top:4px"><div class="t" style="left:3px;top:6.9px">Select a City</div></div>
<div class="sel" style="top:28.7px;height:24px"><div class="t" style="left:6.5px;top:6.3px;font-size:9.3px;color:#333">Bishkek</div>
<div class="t" style="left:195.5px;top:4.2px;font-size:11px;color:#888">×</div><div class="abs" style="left:208px;top:8.8px;width:0;height:0;border-left:3.5px solid transparent;border-right:3.5px solid transparent;border-top:4px solid #888"></div></div>
<div class="bluebar" style="top:67px"><div class="t" style="left:3px;top:7.5px">Select a Parameter</div></div>
<div class="sel" style="top:91.5px"><div class="t" style="left:6.5px;top:6.6px;font-size:9.3px;color:#333">PM2.5</div>
<div class="t" style="left:195.5px;top:4.2px;font-size:11px;color:#888">×</div><div class="abs" style="left:208px;top:8.8px;width:0;height:0;border-left:3.5px solid transparent;border-right:3.5px solid transparent;border-top:4px solid #888"></div></div>
<div class="abs" style="left:509.1px;top:128.7px;width:223.8px;height:49.3px;background:#fff;border:1px solid #c8c8c8"></div>
<div class="t" style="left:516.2px;top:136.6px;font-size:9.4px;font-weight:bold;color:#3a3a3a">Bishkek</div>
<svg class="abs" style="left:702px;top:147px" width="23" height="23" viewBox="0 0 23 23"><rect width="23" height="23" fill="#f0b443"/>
<circle cx="5.5" cy="17.5" r="2.3" fill="#fff"/><path d="M3.5 10.5 A9 9 0 0 1 12.5 19.5" stroke="#fff" stroke-width="2.6" fill="none"/><path d="M3.5 4.5 A15 15 0 0 1 18.5 19.5" stroke="#fff" stroke-width="2.6" fill="none"/></svg>
<div class="abs" style="left:508.8px;top:184.6px;width:228px;font-size:7.3px;line-height:13px;color:#555">Note: Values above 500 are considered Beyond the AQI. Follow recommendations for the Hazardous category. Additional information on reducing exposure to extremely high levels of particle pollution is available <b style="color:#1a3668;text-decoration:underline">here</b>.</div>

<!-- tabs -->
<div class="abs" style="left:20px;top:335.5px;width:713px;height:1.5px;background:#9a9a9a"></div>
<div class="tab" style="left:20px;width:72px;background:#fff;border:1px solid #9a9a9a;border-top:2px solid #03457e;border-bottom:none;height:20px"><div class="t" style="left:0;width:70px;top:4.8px;color:#333">AQI</div></div>
<div class="tab" style="left:94px;width:111px;background:#d3d3d3;top:316px;height:19.5px"><div class="t" style="left:0;width:111px;top:7px;color:#666">Concentration</div></div>
<div class="tab" style="left:207px;width:92px;background:#d3d3d3;top:316px;height:19.5px"><div class="t" style="left:0;width:92px;top:7px;color:#666">Historical</div></div>
<div class="t" style="left:20px;top:346px;font-size:9.3px;color:#333">Learn more about how the Air Quality Index [AQI] is calculated from the EPA <b style="color:#1a3668;text-decoration:underline">here</b>.</div>

<svg class="abs" style="left:20px;top:370px" width="534" height="200" viewBox="20 370 534 200">
<rect x="20" y="370" width="534" height="200" fill="#fff"/>
<text x="287.4" y="385.5" font-family="Liberation Sans" font-size="11.2" fill="#333" text-anchor="middle" letter-spacing="0.72">Bishkek – PM2.5</text>
<rect x="70" y="410.5" width="477.5" height="1" fill="#e6e6e6"/>
<text x="60.3" y="412.1" font-family="Liberation Sans" font-size="7.4" fill="#000" stroke="#000" stroke-width="0.15" text-anchor="end" letter-spacing="0.25">500</text>
<rect x="70" y="434.7" width="477.5" height="1" fill="#e6e6e6"/>
<text x="60.3" y="436.3" font-family="Liberation Sans" font-size="7.4" fill="#000" stroke="#000" stroke-width="0.15" text-anchor="end" letter-spacing="0.25">400</text>
<rect x="70" y="458.9" width="477.5" height="1" fill="#e6e6e6"/>
<text x="60.3" y="460.5" font-family="Liberation Sans" font-size="7.4" fill="#000" stroke="#000" stroke-width="0.15" text-anchor="end" letter-spacing="0.25">300</text>
<rect x="70" y="483.1" width="477.5" height="1" fill="#e6e6e6"/>
<text x="60.3" y="484.7" font-family="Liberation Sans" font-size="7.4" fill="#000" stroke="#000" stroke-width="0.15" text-anchor="end" letter-spacing="0.25">200</text>
<rect x="70" y="507.7" width="477.5" height="1" fill="#e6e6e6"/>
<text x="60.3" y="509.3" font-family="Liberation Sans" font-size="7.4" fill="#000" stroke="#000" stroke-width="0.15" text-anchor="end" letter-spacing="0.25">100</text>
<text x="60.3" y="534" font-family="Liberation Sans" font-size="7.4" fill="#000" stroke="#000" stroke-width="0.15" text-anchor="end">0</text>
<text x="0" y="0" font-family="Liberation Sans" font-size="7.3" fill="#222" text-anchor="middle" transform="translate(39.4,468.2) rotate(-90)">AQI</text>
<rect x="75.5" y="516.8" width="10" height="15.2" fill="#ffff00" stroke="#5a5a3a" stroke-width="1"/>
<rect x="95.5" y="518.8" width="10" height="13.2" fill="#ffff00" stroke="#5a5a3a" stroke-width="1"/>
<rect x="115.5" y="521.7" width="10" height="10.3" fill="#00e400" stroke="#2a3a2a" stroke-width="1"/>
<rect x="135.5" y="518.7" width="10" height="13.3" fill="#ffff00" stroke="#5a5a3a" stroke-width="1"/>
<rect x="155.5" y="518.7" width="10" height="13.3" fill="#ffff00" stroke="#5a5a3a" stroke-width="1"/>
<rect x="174.5" y="518.7" width="10" height="13.3" fill="#ffff00" stroke="#5a5a3a" stroke-width="1"/>
<rect x="194.5" y="520.6" width="10" height="11.4" fill="#00e400" stroke="#2a3a2a" stroke-width="1"/>
<rect x="214.5" y="521.7" width="10" height="10.3" fill="#00e400" stroke="#2a3a2a" stroke-width="1"/>
<rect x="234.5" y="518.6" width="10" height="13.4" fill="#ffff00" stroke="#5a5a3a" stroke-width="1"/>
<rect x="254.5" y="518.6" width="10" height="13.4" fill="#ffff00" stroke="#5a5a3a" stroke-width="1"/>
<rect x="274.5" y="515.0" width="10" height="17.0" fill="#ffff00" stroke="#5a5a3a" stroke-width="1"/>
<rect x="294.5" y="515.6" width="10" height="16.4" fill="#ffff00" stroke="#5a5a3a" stroke-width="1"/>
<rect x="313.5" y="517.3" width="10" height="14.7" fill="#ffff00" stroke="#5a5a3a" stroke-width="1"/>
<rect x="333.5" y="518.6" width="10" height="13.4" fill="#ffff00" stroke="#5a5a3a" stroke-width="1"/>
<rect x="353.5" y="519.0" width="10" height="13.0" fill="#ffff00" stroke="#5a5a3a" stroke-width="1"/>
<rect x="373.5" y="521.3" width="10" height="10.7" fill="#00e400" stroke="#2a3a2a" stroke-width="1"/>
<rect x="393.5" y="522.7" width="10" height="9.3" fill="#00e400" stroke="#2a3a2a" stroke-width="1"/>
<rect x="413.5" y="524.7" width="10" height="7.3" fill="#00e400" stroke="#2a3a2a" stroke-width="1"/>
<rect x="433.5" y="527.5" width="10" height="4.5" fill="#00e400" stroke="#2a3a2a" stroke-width="1"/>
<rect x="452.5" y="529.8" width="10" height="2.2" fill="#00e400" stroke="#2a3a2a" stroke-width="1"/>
<rect x="472.5" y="528.7" width="10" height="3.3" fill="#00e400" stroke="#2a3a2a" stroke-width="1"/>
<rect x="492.5" y="527.5" width="10" height="4.5" fill="#00e400" stroke="#2a3a2a" stroke-width="1"/>
<rect x="512.5" y="528.6" width="10" height="3.4" fill="#00e400" stroke="#2a3a2a" stroke-width="1"/>
<rect x="532.5" y="530.5" width="10" height="1.5" fill="#00e400" stroke="#2a3a2a" stroke-width="1"/>
<rect x="70" y="532" width="477.5" height="1" fill="#ccd6eb"/>
<rect x="69.8" y="532" width="1" height="7" fill="#ccd6eb"/>
<rect x="89.7" y="532" width="1" height="7" fill="#ccd6eb"/>
<rect x="109.6" y="532" width="1" height="7" fill="#ccd6eb"/>
<rect x="129.4" y="532" width="1" height="7" fill="#ccd6eb"/>
<rect x="149.3" y="532" width="1" height="7" fill="#ccd6eb"/>
<rect x="169.2" y="532" width="1" height="7" fill="#ccd6eb"/>
<rect x="189.1" y="532" width="1" height="7" fill="#ccd6eb"/>
<rect x="209.0" y="532" width="1" height="7" fill="#ccd6eb"/>
<rect x="228.9" y="532" width="1" height="7" fill="#ccd6eb"/>
<rect x="248.8" y="532" width="1" height="7" fill="#ccd6eb"/>
<rect x="268.6" y="532" width="1" height="7" fill="#ccd6eb"/>
<rect x="288.5" y="532" width="1" height="7" fill="#ccd6eb"/>
<rect x="308.4" y="532" width="1" height="7" fill="#ccd6eb"/>
<rect x="328.3" y="532" width="1" height="7" fill="#ccd6eb"/>
<rect x="348.2" y="532" width="1" height="7" fill="#ccd6eb"/>
<rect x="368.1" y="532" width="1" height="7" fill="#ccd6eb"/>
<rect x="387.9" y="532" width="1" height="7" fill="#ccd6eb"/>
<rect x="407.8" y="532" width="1" height="7" fill="#ccd6eb"/>
<rect x="427.7" y="532" width="1" height="7" fill="#ccd6eb"/>
<rect x="447.6" y="532" width="1" height="7" fill="#ccd6eb"/>
<rect x="467.5" y="532" width="1" height="7" fill="#ccd6eb"/>
<rect x="487.4" y="532" width="1" height="7" fill="#ccd6eb"/>
<rect x="507.2" y="532" width="1" height="7" fill="#ccd6eb"/>
<rect x="527.1" y="532" width="1" height="7" fill="#ccd6eb"/>
<rect x="547.0" y="532" width="1" height="7" fill="#ccd6eb"/>
<text x="0" y="0" font-family="Liberation Sans" font-size="7.3" fill="#666" text-anchor="end" transform="translate(81.6,543) rotate(-45)">10 AM</text>
<text x="0" y="0" font-family="Liberation Sans" font-size="7.3" fill="#666" text-anchor="end" transform="translate(101.5,543) rotate(-45)">11 AM</text>
<text x="0" y="0" font-family="Liberation Sans" font-size="7.3" fill="#666" text-anchor="end" transform="translate(121.4,543) rotate(-45)">12 PM</text>
<text x="0" y="0" font-family="Liberation Sans" font-size="7.3" fill="#666" text-anchor="end" transform="translate(141.3,543) rotate(-45)">1 PM</text>
<text x="0" y="0" font-family="Liberation Sans" font-size="7.3" fill="#666" text-anchor="end" transform="translate(161.2,543) rotate(-45)">2 PM</text>
<text x="0" y="0" font-family="Liberation Sans" font-size="7.3" fill="#666" text-anchor="end" transform="translate(181.1,543) rotate(-45)">3 PM</text>
<text x="0" y="0" font-family="Liberation Sans" font-size="7.3" fill="#666" text-anchor="end" transform="translate(200.9,543) rotate(-45)">4 PM</text>
<text x="0" y="0" font-family="Liberation Sans" font-size="7.3" fill="#666" text-anchor="end" transform="translate(220.8,543) rotate(-45)">5 PM</text>
<text x="0" y="0" font-family="Liberation Sans" font-size="7.3" fill="#666" text-anchor="end" transform="translate(240.7,543) rotate(-45)">6 PM</text>
<text x="0" y="0" font-family="Liberation Sans" font-size="7.3" fill="#666" text-anchor="end" transform="translate(260.6,543) rotate(-45)">7 PM</text>
<text x="0" y="0" font-family="Liberation Sans" font-size="7.3" fill="#666" text-anchor="end" transform="translate(280.5,543) rotate(-45)">8 PM</text>
<text x="0" y="0" font-family="Liberation Sans" font-size="7.3" fill="#666" text-anchor="end" transform="translate(300.4,543) rotate(-45)">9 PM</text>
<text x="0" y="0" font-family="Liberation Sans" font-size="7.3" fill="#666" text-anchor="end" transform="translate(320.2,543) rotate(-45)">10 PM</text>
<text x="0" y="0" font-family="Liberation Sans" font-size="7.3" fill="#666" text-anchor="end" transform="translate(340.1,543) rotate(-45)">11 PM</text>
<text x="0" y="0" font-family="Liberation Sans" font-size="7.3" fill="#666" text-anchor="end" transform="translate(360.0,543) rotate(-45)">11/29/2020 12 AM</text>
<text x="0" y="0" font-family="Liberation Sans" font-size="7.3" fill="#666" text-anchor="end" transform="translate(379.9,543) rotate(-45)">1 AM</text>
<text x="0" y="0" font-family="Liberation Sans" font-size="7.3" fill="#666" text-anchor="end" transform="translate(399.8,543) rotate(-45)">2 AM</text>
<text x="0" y="0" font-family="Liberation Sans" font-size="7.3" fill="#666" text-anchor="end" transform="translate(419.7,543) rotate(-45)">3 AM</text>
<text x="0" y="0" font-family="Liberation Sans" font-size="7.3" fill="#666" text-anchor="end" transform="translate(439.5,543) rotate(-45)">4 AM</text>
<text x="0" y="0" font-family="Liberation Sans" font-size="7.3" fill="#666" text-anchor="end" transform="translate(459.4,543) rotate(-45)">5 AM</text>
<text x="0" y="0" font-family="Liberation Sans" font-size="7.3" fill="#666" text-anchor="end" transform="translate(479.3,543) rotate(-45)">6 AM</text>
<text x="0" y="0" font-family="Liberation Sans" font-size="7.3" fill="#666" text-anchor="end" transform="translate(499.2,543) rotate(-45)">7 AM</text>
<text x="0" y="0" font-family="Liberation Sans" font-size="7.3" fill="#666" text-anchor="end" transform="translate(519.1,543) rotate(-45)">8 AM</text>
<text x="0" y="0" font-family="Liberation Sans" font-size="7.3" fill="#666" text-anchor="end" transform="translate(539.0,543) rotate(-45)">9 AM</text>
</svg>

<!-- current conditions -->
<div class="abs" style="left:565px;top:370px;width:168px;height:196px;border:1px solid #03457e;background:#eeeeee"></div>
<div class="abs" style="left:565px;top:370px;width:168px;height:50px;background:#03457e"></div>
<div class="abs" style="left:566px;top:420px;width:166px;height:77px;background:#00e400"></div>
<div class="t" style="left:565px;width:168px;text-align:center;top:375.6px;font-size:10px;font-weight:bold;color:#fff">Current Conditions</div>
<div class="t" style="left:565px;width:168px;text-align:center;top:391.9px;font-size:8px;font-weight:bold;color:#fff">observed at</div>
<div class="t" style="left:565px;width:168px;text-align:center;top:403.6px;font-size:10px;font-weight:bold;color:#fff">Nov 29, 2020 9:00 AM (LT)</div>
<div class="t" style="left:565px;width:168px;text-align:center;top:432.6px;font-size:13.3px;color:#000;-webkit-text-stroke:0.25px #000;letter-spacing:0.2px">7 AQI</div>
<div class="t" style="left:565px;width:168px;text-align:center;top:450.9px;font-size:13.3px;color:#000;-webkit-text-stroke:0.25px #000">Good</div>
<div class="t" style="left:565px;width:168px;text-align:center;top:471.1px;font-size:13.3px;color:#000;-webkit-text-stroke:0.25px #000">PM2.5</div>
<div class="t" style="left:565px;width:168px;text-align:center;top:504.8px;font-size:8px;font-weight:bold;color:#222">Health Message</div>
<div class="abs" style="left:569px;top:517.5px;width:166px;font-size:8px;line-height:14px;color:#4a4a4a;white-space:nowrap">The AQI value for your community is<br>between 0 and 50. Air quality is satisfactory<br>and poses little or no health risk.</div>
</body></html>
